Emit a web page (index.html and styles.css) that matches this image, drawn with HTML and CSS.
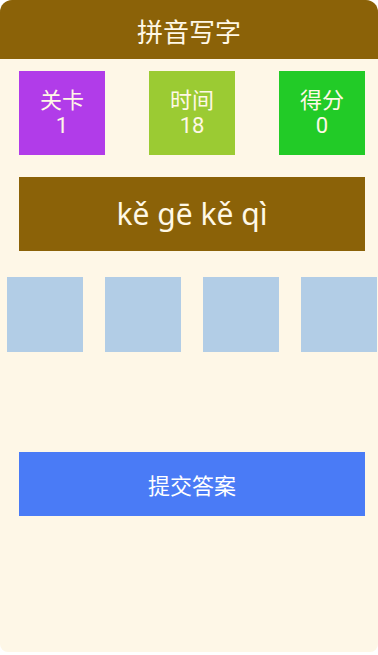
FILE: index.html
```html
<!DOCTYPE html>
<html lang="zh">
<head>
<meta charset="utf-8">
<title>拼音写字</title>
<link rel="stylesheet" href="styles.css">
</head>
<body>
<div class="app">
  <div class="header">拼音写字</div>
  <div class="stats">
    <div class="stat stat-level"><span>关卡</span><span>1</span></div>
    <div class="stat stat-time"><span>时间</span><span>18</span></div>
    <div class="stat stat-score"><span>得分</span><span>0</span></div>
  </div>
  <div class="pinyin">kě gē kě qì</div>
  <div class="slots">
    <div class="slot"></div>
    <div class="slot"></div>
    <div class="slot"></div>
    <div class="slot"></div>
  </div>
  <div class="submit">提交答案</div>
</div>
</body>
</html>
```
FILE: styles.css
```css
html, body {
  margin: 0;
  padding: 0;
  background: #ffffff;
}
body {
  font-family: Roboto, "Noto Sans CJK SC", sans-serif;
}
.app {
  width: 378px;
  height: 652px;
  background: #fef7e7;
  border-radius: 12px 12px 8px 8px;
  overflow: hidden;
  color: #fff8e6;
}
.header {
  height: 59px;
  background: #8b6208;
  display: flex;
  align-items: center;
  justify-content: center;
  font-size: 26px;
  padding-top: 2px;
  box-sizing: border-box;
}
.stats {
  display: flex;
  justify-content: space-between;
  margin: 12px 13px 0 19px;
}
.stat {
  width: 86px;
  height: 84px;
  display: flex;
  flex-direction: column;
  align-items: center;
  justify-content: center;
  font-size: 22px;
  line-height: 25px;
}
.stat-level { background: #b13ce9; }
.stat-time { background: #9bcb33; }
.stat-score { background: #22cb27; }
.pinyin {
  margin: 22px 13px 0 19px;
  height: 74px;
  background: #8b6208;
  display: flex;
  align-items: center;
  justify-content: center;
  font-family: "Noto Sans", sans-serif;
  font-size: 30px;
  padding-bottom: 2px;
  box-sizing: border-box;
}
.slots {
  display: flex;
  gap: 22px;
  margin-top: 26px;
  padding-left: 7px;
}
.slot {
  flex: none;
  width: 76px;
  height: 75px;
  background: #b2cde6;
}
.submit {
  margin: 100px 13px 0 19px;
  height: 64px;
  background: #4a7bf6;
  display: flex;
  align-items: center;
  justify-content: center;
  font-size: 22px;
  color: #ffffff;
}
```
